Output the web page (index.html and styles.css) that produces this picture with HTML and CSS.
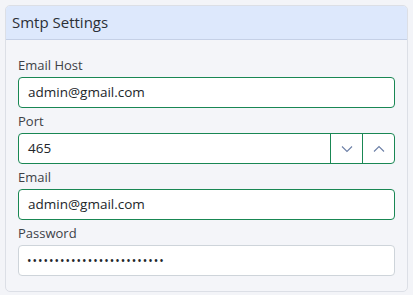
FILE: index.html
```html
<!DOCTYPE html>
<html>
<head>
<meta charset="utf-8">
<link rel="stylesheet" href="styles.css">
</head>
<body>
<div class="card">
  <div class="card-header">Smtp Settings</div>
  <div class="card-body">
    <div class="group">
      <label class="label">Email Host</label>
      <div class="input valid">admin@gmail.com</div>
    </div>
    <div class="group">
      <label class="label">Port</label>
      <div class="input valid spin">
        <span class="spin-value">465</span>
        <span class="spin-btn"><svg width="12" height="8" viewBox="0 0 12 8"><path d="M1 1.5 L6 6.5 L11 1.5" fill="none" stroke="#6b7fa6" stroke-width="1.1"/></svg></span>
        <span class="spin-btn"><svg width="12" height="8" viewBox="0 0 12 8"><path d="M1 6.5 L6 1.5 L11 6.5" fill="none" stroke="#6b7fa6" stroke-width="1.1"/></svg></span>
      </div>
    </div>
    <div class="group">
      <label class="label">Email</label>
      <div class="input valid">admin@gmail.com</div>
    </div>
    <div class="group">
      <label class="label">Password</label>
      <div class="input pw">&bull;&bull;&bull;&bull;&bull;&bull;&bull;&bull;&bull;&bull;&bull;&bull;&bull;&bull;&bull;&bull;&bull;&bull;&bull;&bull;&bull;&bull;&bull;&bull;&bull;</div>
    </div>
  </div>
</div>
</body>
</html>
```
FILE: styles.css
```css
html, body { margin: 0; padding: 0; }
body {
  background: #f3f4f8;
  font-family: "Open Sans", "Noto Sans", sans-serif;
  color: #212529;
  padding: 5px 5px 0 5px;
}
.card {
  border: 1px solid #dcdfe6;
  border-radius: 5px;
  background: #f4f5f9;
  width: 403px;
  box-sizing: border-box;
  overflow: hidden;
}
.card-header {
  background: #dde8fc;
  border-bottom: 1px solid #c5d0e6;
  height: 33px;
  line-height: 33px;
  padding-left: 6px;
  font-size: 15px;
  color: #2b2f36;
}
.card-body {
  padding: 15px 12px 12px 12px;
  display: flex;
  flex-direction: column;
}
.group { display: flex; flex-direction: column; }
.label {
  font-size: 13px;
  line-height: 20px;
  height: 21px;
  margin-bottom: 1px;
  color: #3d4147;
  font-weight: 500;
}
.input {
  box-sizing: border-box;
  height: 31px;
  border: 1px solid #ced4da;
  border-radius: 4px;
  background: #fff;
  font-size: 13.5px;
  line-height: 29px;
  padding-left: 9px;
  margin-bottom: 3px;
}
.input.valid { border-color: #198754; }
.pw { font-size: 12px; letter-spacing: 1px; padding-left: 8px; }
.spin { display: flex; padding-left: 0; overflow: hidden; }
.spin-value { flex: 1; padding-left: 9px; }
.spin-btn {
  width: 31px;
  border-left: 1px solid #198754;
  display: flex;
  align-items: center;
  justify-content: center;
}
```
